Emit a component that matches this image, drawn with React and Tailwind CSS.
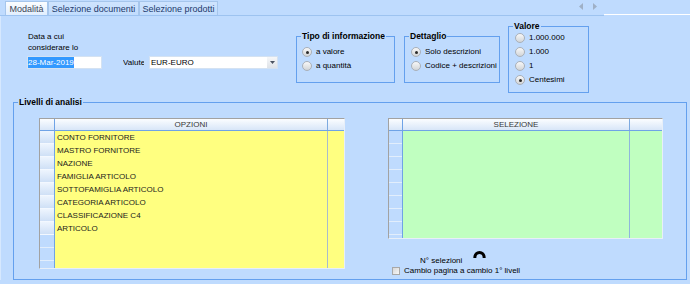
import React from "react";

const ROWS = [
  "CONTO FORNITORE",
  "MASTRO FORNITORE",
  "NAZIONE",
  "FAMIGLIA ARTICOLO",
  "SOTTOFAMIGLIA ARTICOLO",
  "CATEGORIA ARTICOLO",
  "CLASSIFICAZIONE C4",
  "ARTICOLO",
];

function Radio({ checked }) {
  return (
    <span className="flex items-center justify-center w-[10px] h-[10px] shrink-0 rounded-full border border-[#aab0b8] bg-linear-to-b from-[#f8f8f8] to-[#d2d5d8]">
      {checked && <span className="w-[3px] h-[3px] rounded-full bg-[#2a2a2a]" />}
    </span>
  );
}

function RadioRow({ checked, children }) {
  return (
    <div className="flex items-center h-[14px] gap-[4px] whitespace-nowrap">
      <Radio checked={checked} />
      <span>{children}</span>
    </div>
  );
}

function Legend({ children }) {
  return (
    <legend className="px-[1px] font-bold text-[8.5px] leading-[11px] text-black">
      {children}
    </legend>
  );
}

function Tab({ active, className, children }) {
  return (
    <div
      className={
        "h-[14px] flex items-center justify-center border border-b-0 text-[9px] leading-[12px] whitespace-nowrap " +
        (active
          ? "border-[#a6c6ec] bg-linear-to-b from-[#fbfdff] to-[#e1eefe] text-[#3c4656] "
          : "border-[#a6c6ec] bg-linear-to-b from-[#cfe4fe] to-[#c1dcfd] text-[#1d3a6c] ") +
        className
      }
    >
      {children}
    </div>
  );
}

function RowHeadData() {
  return (
    <div className="h-[13px] shrink-0 border-b border-[#f3f8ff] bg-linear-to-b from-[#eef5fe] to-[#cfe0f6]" />
  );
}

function RowHeadEmpty() {
  return <div className="h-[13px] shrink-0 border-b border-[#e2eefc]" />;
}

export default function App() {
  return (
    <div className="w-[690px] h-[284px] overflow-hidden bg-[#bfdbfe] font-['Liberation_Sans',Arial,sans-serif] text-[8px] text-black">
      {/* Tab bar */}
      <div className="flex items-end h-[16px]">
        <div className="w-[604px] h-full flex items-end border-b border-[#9dc3f0] pl-[5px]">
          <Tab active className="w-[43px]">Modalità</Tab>
          <Tab className="w-[91px]">Selezione documenti</Tab>
          <Tab className="w-[79px]">Selezione prodotti</Tab>
          <div className="ml-auto mr-[7px] mb-[5px] flex items-center gap-[10px]">
            <svg width="4" height="7" viewBox="0 0 4 7">
              <path d="M4 0 L0 3.5 L4 7 Z" fill="#9fb0c6" />
            </svg>
            <svg width="4" height="7" viewBox="0 0 4 7">
              <path d="M0 0 L4 3.5 L0 7 Z" fill="#9fb0c6" />
            </svg>
          </div>
        </div>
        <div className="flex-1 h-full border-b border-white mb-[1px]" />
      </div>

      {/* Content */}
      <div className="flex flex-col border-l border-[#d6e8fe]">
        {/* Top row */}
        <div className="flex items-start h-[81px]">
          <div className="ml-[26px] mt-[15px] w-[75px] flex flex-col">
            <div className="leading-[11px] pl-[1px]">Data a cui</div>
            <div className="leading-[11px] pl-[1px]">considerare lo</div>
            <div className="mt-[3px] w-[75px] h-[13px] bg-white border border-[#d4e2f2] flex items-center">
              <span className="bg-[#3399ff] text-white leading-[11px]">28-Mar-2019</span>
            </div>
          </div>

          <div className="ml-[21px] mt-[40px] flex items-center h-[13px]">
            <div className="w-[21px] overflow-hidden whitespace-nowrap leading-[11px]">Valute</div>
            <div className="ml-[5px] w-[129px] h-[13px] bg-white border border-[#d4e2f2] flex items-center">
              <span className="pl-[1px] flex-1 leading-[11px]">EUR-EURO</span>
              <div className="w-[10px] h-full bg-linear-to-b from-[#f6f7f9] to-[#dfe3e8] flex items-center justify-center">
                <svg width="5" height="3" viewBox="0 0 5 3">
                  <path d="M0 0 L5 0 L2.5 3 Z" fill="#4a5260" />
                </svg>
              </div>
            </div>
          </div>

          <fieldset className="ml-[18px] mt-[15px] w-[99px] h-[52px] min-w-0 border border-[#64a0ee] pl-[4px]">
            <Legend>Tipo di informazione</Legend>
            <div className="mt-[3px] pl-[1px]">
              <RadioRow checked>a valore</RadioRow>
              <RadioRow>a quantità</RadioRow>
            </div>
          </fieldset>

          <fieldset className="ml-[9px] mt-[15px] w-[96px] h-[52px] min-w-0 border border-[#64a0ee] pl-[4px]">
            <Legend>Dettaglio</Legend>
            <div className="mt-[3px] pl-[2px]">
              <RadioRow checked>Solo descrizioni</RadioRow>
              <RadioRow>Codice + descrizioni</RadioRow>
            </div>
          </fieldset>

          <fieldset className="ml-[8px] mt-[5px] w-[81px] h-[72px] min-w-0 border border-[#64a0ee] pl-[4px]">
            <Legend>Valore</Legend>
            <div className="-mt-[1px] pl-[2px]">
              <RadioRow>1.000.000</RadioRow>
              <RadioRow>1.000</RadioRow>
              <RadioRow>1</RadioRow>
              <RadioRow checked>Centesimi</RadioRow>
            </div>
          </fieldset>
        </div>

        {/* Livelli di analisi */}
        <fieldset className="ml-[12px] w-[674px] h-[183px] min-w-0 border border-[#64a0ee] pl-[4px]">
          <Legend>Livelli di analisi</Legend>
          <div className="mt-[10px] flex items-start">
            {/* Left grid */}
            <div className="ml-[21px] w-[306px] h-[151px] shrink-0 flex flex-col border border-[#a2a2a2] border-r-[#e8eff8] border-b-[#e8eff8]">
              <div className="flex h-[12px] shrink-0 border-b border-[#6fa3e6] bg-linear-to-b from-[#fbfdff] to-[#d8e6f8] text-[#383838] leading-[11px]">
                <div className="w-[15px] border-r border-[#6fa3e6]" />
                <div className="w-[273px] border-r border-[#7eaae0] text-center">OPZIONI</div>
                <div className="flex-1" />
              </div>
              <div className="flex flex-1 min-h-0">
                <div className="w-[15px] border-r border-[#6fa3e6] flex flex-col overflow-hidden">
                  {ROWS.map((r) => (
                    <RowHeadData key={r} />
                  ))}
                  <RowHeadEmpty />
                  <RowHeadEmpty />
                  <RowHeadEmpty />
                </div>
                <div className="w-[273px] border-r border-[#a9bccb] bg-[#ffff80] flex flex-col">
                  {ROWS.map((r) => (
                    <div key={r} className="h-[13px] leading-[13px] pl-[2px] text-[#1c1c1c] whitespace-nowrap">
                      {r}
                    </div>
                  ))}
                </div>
                <div className="flex-1 bg-[#ffff80]" />
              </div>
            </div>

            {/* Right column */}
            <div className="ml-[43px] flex flex-col">
              <div className="w-[275px] h-[121px] shrink-0 flex flex-col border border-[#a2a2a2] border-r-[#e8eff8] border-b-[#e8eff8]">
                <div className="flex h-[12px] shrink-0 border-b border-[#6fa3e6] bg-linear-to-b from-[#fbfdff] to-[#d8e6f8] text-[#383838] leading-[11px]">
                  <div className="w-[14px] border-r border-[#6fa3e6]" />
                  <div className="w-[227px] border-r border-[#7eaae0] text-center">SELEZIONE</div>
                  <div className="flex-1" />
                </div>
                <div className="flex flex-1 min-h-0">
                  <div className="w-[14px] border-r border-[#6fa3e6] flex flex-col overflow-hidden">
                    <RowHeadEmpty />
                    <RowHeadEmpty />
                    <RowHeadEmpty />
                    <RowHeadEmpty />
                    <RowHeadEmpty />
                    <RowHeadEmpty />
                    <RowHeadEmpty />
                    <RowHeadEmpty />
                  </div>
                  <div className="w-[227px] border-r border-[#8fb6dc] bg-[#c0ffc0]" />
                  <div className="flex-1 bg-[#c0ffc0]" />
                </div>
              </div>

              <div className="mt-[11px] h-[16px] flex items-start">
                <div className="ml-[32px] mt-[5px] leading-[11px] whitespace-nowrap">N° selezioni</div>
                <svg className="ml-[11px]" width="13" height="8" viewBox="0 0 13 8">
                  <path d="M1.8 8 C1.8 0.6 11.2 0.6 11.2 8" fill="none" stroke="#000" strokeWidth="3" />
                </svg>
              </div>
              <div className="h-[10px] flex items-center">
                <span className="ml-[4px] w-[8px] h-[8px] shrink-0 border border-[#a8a8a8] bg-linear-to-br from-[#d8d8d8] to-[#f7f7f7]" />
                <span className="ml-[4px] whitespace-nowrap leading-[10px]">
                  Cambio pagina a cambio 1° livell
                </span>
              </div>
            </div>
          </div>
        </fieldset>
      </div>
    </div>
  );
}
